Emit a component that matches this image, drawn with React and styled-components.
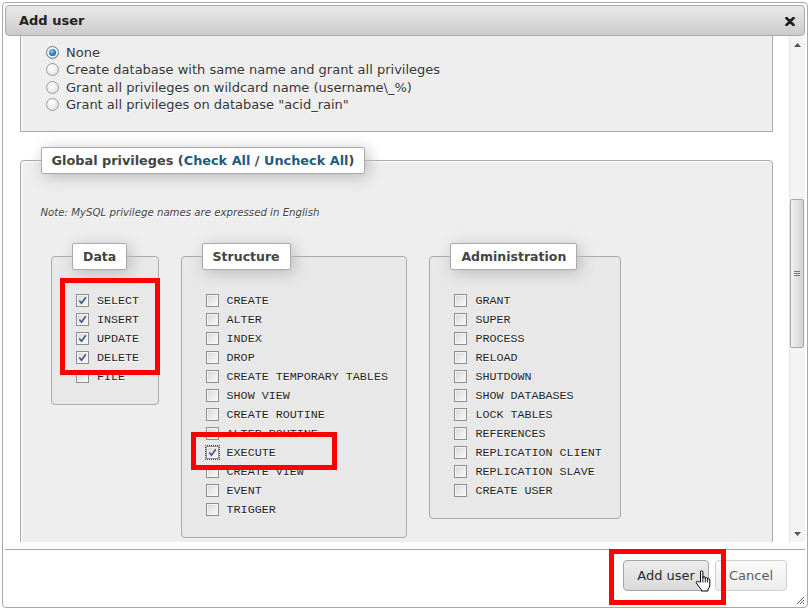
import React from "react";
import styled, { createGlobalStyle } from "styled-components";

const Global = createGlobalStyle`
  html, body { margin: 0; padding: 0; background: #fff; }
  body { font-family: "DejaVu Sans", Verdana, sans-serif; }
  * { box-sizing: border-box; }
`;

const Page = styled.div`
  position: relative;
  width: 809px;
  height: 609px;
  padding: 2px 0 0 2px;
`;

const Dialog = styled.div`
  width: 806px;
  height: 606px;
  border: 1px solid #aaa;
  border-radius: 4px;
  padding: 2px;
  background: #fff;
  display: flex;
  flex-direction: column;
`;

const TitleBar = styled.div`
  height: 31px;
  flex: none;
  border: 1px solid #aaa;
  border-radius: 4px;
  background: linear-gradient(#e9e9e9, #cbcbcb);
  display: flex;
  align-items: center;
  justify-content: space-between;
  padding: 0 9px 0 13px;
`;

const Title = styled.span`
  font-weight: bold;
  font-size: 13px;
  color: #222;
`;

const CloseIcon = styled.svg`
  display: block;
  margin-top: 1px;
`;

const Viewport = styled.div`
  height: 506px;
  flex: none;
  display: flex;
  overflow: hidden;
`;

const Content = styled.div`
  width: 784px;
  flex: none;
  padding: 0 16px 0 15px;
  display: flex;
  flex-direction: column;
`;

const OuterFieldset = styled.fieldset`
  margin: ${(p) => p.$mt || 0}px 0 0 0;
  border: 1px solid #aaa;
  border-radius: 4px 4px 0 0;
  background: #eee;
  padding: ${(p) => p.$pad};
  min-width: 0;
  text-shadow: 0 1px 0 #fff;
  box-shadow: 1px 1px 2px #fff inset;
`;

const Legend = styled.legend`
  padding: 4px 10px;
  border: 1px solid #aaa;
  border-radius: 2px;
  background: #fff;
  box-shadow: 3px 3px 15px #bbb;
  font-weight: bold;
  font-size: ${(p) => p.$size || 12.5}px;
  line-height: 17px;
  color: #444;
  margin: 0;
  text-shadow: none;
`;

const LegendLink = styled.a`
  color: #235a81;
  text-decoration: none;
`;

const RadioRow = styled.label`
  display: flex;
  align-items: center;
  height: 17.4px;
  font-size: 13px;
  color: #333;
`;

const Radio = styled.span`
  width: 13px;
  height: 13px;
  flex: none;
  margin: 0 7.5px 0 5px;
  border-radius: 50%;
  border: 1px solid ${(p) => (p.$checked ? "#5a7ea6" : "#9a9a9a")};
  background: radial-gradient(circle at 40% 35%, #ffffff 0%, #ececec 55%, #d4d4d4 100%);
  display: flex;
  align-items: center;
  justify-content: center;
  &::after {
    content: "";
    display: ${(p) => (p.$checked ? "block" : "none")};
    width: 7px;
    height: 7px;
    border-radius: 50%;
    background: radial-gradient(circle at 40% 35%, #8fd0ff 0%, #2d7fc4 50%, #154f86 100%);
  }
`;

const Note = styled.p`
  margin: 12px 0 0 0;
  font-size: 10.2px;
  line-height: 14px;
  font-style: italic;
  color: #444;
`;

const PrivRow = styled.div`
  display: flex;
  align-items: flex-start;
  gap: 22px;
  margin-top: 23.5px;
  padding-left: 10.5px;
`;

const Group = styled.fieldset`
  margin: 0;
  min-width: 0;
  border: 1px solid #aaa;
  border-radius: 4px;
  background: #e8e8e8;
  padding: 21.2px 18.5px 17.5px 20px;
`;

const PrivItem = styled.label`
  display: flex;
  align-items: center;
  height: 19px;
  font-family: "Liberation Mono", "Courier New", monospace;
  font-size: 11.7px;
  color: #1e1e1e;
  white-space: nowrap;
`;

const Check = styled.span`
  width: 13px;
  height: 13px;
  flex: none;
  margin: 0 8px 0 4px;
  border: 1px solid #8f8f8f;
  background: linear-gradient(135deg, #d6d6d6 0%, #ededed 60%, #fbfbfb 100%);
  box-shadow: inset 0 0 0 1px #f4f4f4;
  outline: ${(p) => (p.$focus ? "1px dotted #444" : "none")};
  outline-offset: 0;
  display: flex;
  align-items: center;
  justify-content: center;
`;

const Scrollbar = styled.div`
  width: 16px;
  flex: none;
  background: #f4f4f4;
  border-left: 1px solid #e6e6e6;
  display: flex;
  flex-direction: column;
`;

const ArrowBtn = styled.div`
  height: 17px;
  flex: none;
  display: flex;
  align-items: center;
  justify-content: center;
`;

const Track = styled.div`
  flex: 1;
  padding-top: ${(p) => p.$offset}px;
`;

const Thumb = styled.div`
  width: 14px;
  height: ${(p) => p.$size}px;
  border: 1px solid #a9a9a9;
  border-radius: 2px;
  background: linear-gradient(to right, #f3f3f3, #dedede 60%, #d2d2d2);
  display: flex;
  align-items: center;
  justify-content: center;
`;

const Grip = styled.div`
  width: 6px;
  height: 5px;
  border-top: 1px solid #777;
  border-bottom: 1px solid #777;
  position: relative;
  &::after {
    content: "";
    position: absolute;
    left: 0;
    right: 0;
    top: 1px;
    border-top: 1px solid #777;
  }
`;

const Footer = styled.div`
  margin-top: 7px;
  height: 56px;
  flex: none;
  border-top: 1px solid #aaa;
  display: flex;
  justify-content: flex-end;
  align-items: flex-start;
  gap: 6px;
  padding: 10px 18px 0 0;
  position: relative;
`;

const Button = styled.button`
  height: 31px;
  padding: 0 13px;
  border: 1px solid ${(p) => (p.$primary ? "#a3a3a3" : "#cfcfcf")};
  border-radius: 4px;
  background: ${(p) =>
    p.$primary
      ? "linear-gradient(#ececec, #d9d9d9)"
      : "linear-gradient(#fbfbfb, #ececec)"};
  font-family: "DejaVu Sans", Verdana, sans-serif;
  font-size: 13px;
  color: ${(p) => (p.$primary ? "#2a2a2a" : "#5c5c5c")};
  cursor: pointer;
`;

const Grabber = styled.svg`
  position: absolute;
  right: 0;
  bottom: 0;
`;

const Marker = styled.div`
  position: absolute;
  border: 5px solid #ff0000;
  left: ${(p) => p.$x}px;
  top: ${(p) => p.$y}px;
  width: ${(p) => p.$w}px;
  height: ${(p) => p.$h}px;
  pointer-events: none;
`;

const Pointer = styled.svg`
  position: absolute;
  left: 694px;
  top: 570px;
`;

const dbOptions = [
  { label: "None", checked: true },
  { label: "Create database with same name and grant all privileges" },
  { label: "Grant all privileges on wildcard name (username\\_%)" },
  { label: 'Grant all privileges on database "acid_rain"' },
];

const groups = [
  {
    title: "Data",
    items: [
      ["SELECT", true],
      ["INSERT", true],
      ["UPDATE", true],
      ["DELETE", true],
      ["FILE", false],
    ],
  },
  {
    title: "Structure",
    items: [
      ["CREATE"],
      ["ALTER"],
      ["INDEX"],
      ["DROP"],
      ["CREATE TEMPORARY TABLES"],
      ["SHOW VIEW"],
      ["CREATE ROUTINE"],
      ["ALTER ROUTINE"],
      ["EXECUTE", true, true],
      ["CREATE VIEW"],
      ["EVENT"],
      ["TRIGGER"],
    ],
  },
  {
    title: "Administration",
    items: [
      ["GRANT"],
      ["SUPER"],
      ["PROCESS"],
      ["RELOAD"],
      ["SHUTDOWN"],
      ["SHOW DATABASES"],
      ["LOCK TABLES"],
      ["REFERENCES"],
      ["REPLICATION CLIENT"],
      ["REPLICATION SLAVE"],
      ["CREATE USER"],
    ],
  },
];

function CheckMark() {
  return (
    <svg width="9" height="9" viewBox="0 0 9 9">
      <path d="M1.3 4.6 L3.5 7.2 L7.8 1.2" fill="none" stroke="#3d4f96" strokeWidth="1.6" />
    </svg>
  );
}

export default function App() {
  return (
    <Page>
      <Global />
      <Dialog>
        <TitleBar>
          <Title>Add user</Title>
          <CloseIcon width="10" height="9" viewBox="0 0 10 9">
            <path d="M1.5 1 L8.5 8 M8.5 1 L1.5 8" stroke="#1e1e1e" strokeWidth="2.6" strokeLinecap="round" />
          </CloseIcon>
        </TitleBar>
        <Viewport>
          <Content>
            <OuterFieldset $mt={-10} $pad="16.6px 19.5px 17.6px">
              {dbOptions.map((o) => (
                <RadioRow key={o.label}>
                  <Radio $checked={o.checked} />
                  {o.label}
                </RadioRow>
              ))}
            </OuterFieldset>
            <OuterFieldset $mt={15.5} $pad="19.5px 19.5px 40px">
              <Legend $size={12.85}>
                Global privileges (<LegendLink>Check All</LegendLink> /{" "}
                <LegendLink>Uncheck All</LegendLink>)
              </Legend>
              <Note>Note: MySQL privilege names are expressed in English</Note>
              <PrivRow>
                {groups.map((g) => (
                  <Group key={g.title}>
                    <Legend>{g.title}</Legend>
                    {g.items.map(([name, checked, focus]) => (
                      <PrivItem key={name}>
                        <Check $focus={focus}>{checked && <CheckMark />}</Check>
                        {name}
                      </PrivItem>
                    ))}
                  </Group>
                ))}
              </PrivRow>
            </OuterFieldset>
          </Content>
          <Scrollbar>
            <ArrowBtn>
              <svg width="7" height="4" viewBox="0 0 7 4">
                <path d="M0 4 L3.5 0 L7 4 Z" fill="#555" />
              </svg>
            </ArrowBtn>
            <Track $offset={146}>
              <Thumb $size={149}>
                <Grip />
              </Thumb>
            </Track>
            <ArrowBtn>
              <svg width="7" height="4" viewBox="0 0 7 4">
                <path d="M0 0 L3.5 4 L7 0 Z" fill="#555" />
              </svg>
            </ArrowBtn>
          </Scrollbar>
        </Viewport>
        <Footer>
          <Button $primary>Add user</Button>
          <Button>Cancel</Button>
          <Grabber width="10" height="10" viewBox="0 0 10 10">
            <path d="M9 2 L2 9 M9 5 L5 9 M9 8 L8 9" stroke="#666" strokeWidth="1" />
          </Grabber>
        </Footer>
      </Dialog>
      <Marker $x={60} $y={278} $w={100} $h={97} />
      <Marker $x={191} $y={432} $w={146} $h={38} />
      <Marker $x={609} $y={549} $w={117} $h={56} />
      <Pointer width="18" height="22" viewBox="0 0 18 22">
        <path
          d="M6.5 12 V2.2 Q6.5 0.8 7.7 0.8 Q8.9 0.8 8.9 2.2 V8 Q8.9 6.6 10.1 6.6 Q11.3 6.6 11.3 8 V8.8 Q11.3 7.6 12.4 7.6 Q13.6 7.6 13.6 8.8 V9.6 Q13.6 8.6 14.6 8.6 Q15.8 8.6 15.8 9.8 V15 Q15.8 17.5 14 19.2 V21 H7.4 V19.5 Q6.2 18.3 4.8 16.4 L2.4 13 Q1.8 12 2.7 11.4 Q3.6 10.9 4.4 11.8 Z"
          fill="#fff"
          stroke="#000"
          strokeWidth="1"
          strokeLinejoin="round"
        />
        <path d="M8.9 8 V12.5 M11.3 8.8 V12.5 M13.6 9.6 V12.5" stroke="#000" strokeWidth="0.9" />
      </Pointer>
    </Page>
  );
}
